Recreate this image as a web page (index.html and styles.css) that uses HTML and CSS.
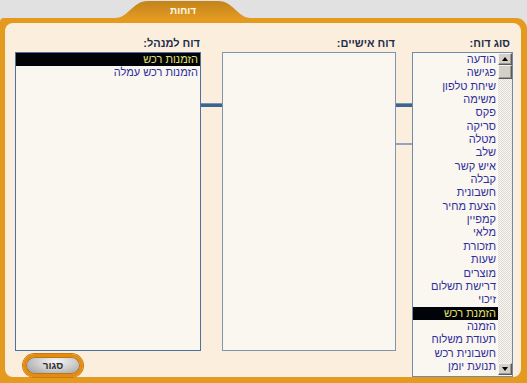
FILE: index.html
```html
<!DOCTYPE html>
<html lang="he">
<head>
<meta charset="utf-8">
<title>דוחות</title>
<link rel="stylesheet" href="styles.css">
</head>
<body>
<div class="tabbar">
  <div class="tab">דוחות</div>
</div>
<div class="panel">
  <div class="inner">
    <div class="cols">
      <div class="col col-type">
        <div class="label">סוג דוח:</div>
        <div class="listbox type-list">
          <div class="items">
            <div class="item">הודעה</div>
            <div class="item">פגישה</div>
            <div class="item">שיחת טלפון</div>
            <div class="item">משימה</div>
            <div class="item">פקס</div>
            <div class="item">סריקה</div>
            <div class="item">מטלה</div>
            <div class="item">שלב</div>
            <div class="item">איש קשר</div>
            <div class="item">קבלה</div>
            <div class="item">חשבונית</div>
            <div class="item">הצעת מחיר</div>
            <div class="item">קמפיין</div>
            <div class="item">מלאי</div>
            <div class="item">תזכורת</div>
            <div class="item">שעות</div>
            <div class="item">מוצרים</div>
            <div class="item">דרישת תשלום</div>
            <div class="item">זיכוי</div>
            <div class="item selected">הזמנת רכש</div>
            <div class="item">הזמנה</div>
            <div class="item">תעודת משלוח</div>
            <div class="item">חשבונית רכש</div>
            <div class="item">תנועת יומן</div>
          </div>
          <div class="scrollbar">
            <div class="sbtn"><span class="tri up"></span></div>
            <div class="thumb"></div>
            <div class="track"></div>
            <div class="sbtn down-btn"><span class="tri down"></span></div>
          </div>
        </div>
      </div>
      <div class="link link-b">
        <div class="bar"></div>
        <div class="bar-thin"></div>
      </div>
      <div class="col col-personal">
        <div class="label">דוח אישיים:</div>
        <div class="listbox personal-list"></div>
      </div>
      <div class="link link-a">
        <div class="bar"></div>
      </div>
      <div class="col col-manager">
        <div class="label">דוח למנהל:</div>
        <div class="listbox manager-list">
          <div class="item selected">הזמנות רכש</div>
          <div class="item">הזמנות רכש עמלה</div>
        </div>
        <button class="close">סגור</button>
      </div>
    </div>
  </div>
</div>
</body>
</html>
```
FILE: styles.css
```css
* { box-sizing: border-box; }
html, body { margin: 0; padding: 0; }
body {
  width: 527px;
  height: 383px;
  overflow: hidden;
  background: #e1e1e1;
  font-family: "Liberation Sans", "DejaVu Sans", Arial, sans-serif;
}
.tabbar {
  height: 18px;
  padding-left: 115px;
  padding-top: 1px;
  display: flex;
}
.tab {
  width: 136px;
  height: 17px;
  clip-path: path('M0 17 C 14 17 17 0 33 0 L 103 0 C 119 0 122 17 136 17 Z');
  background: linear-gradient(#c4841b, #d4901f 60%, #e39a21);
  display: flex;
  align-items: center;
  justify-content: center;
  color: #fffbea;
  font-weight: bold;
  font-size: 10px;
  padding-top: 1px;
  direction: rtl;
}
.panel {
  height: 365px;
  background: #e4991f;
  padding: 5px 6px 6px 5px;
  border-radius: 4px 11px 0 0;
}
.inner {
  height: 100%;
  background: #fbeedd;
  border-radius: 8px;
  padding: 14px 8px 0 10px;
}
.cols {
  display: flex;
  direction: rtl;
  align-items: flex-start;
}
.col {
  display: flex;
  flex-direction: column;
}
.col-type { width: 101px; }
.col-personal { width: 174px; }
.col-manager { width: 186px; }
.label {
  height: 12px;
  line-height: 12px;
  margin-bottom: 3px;
  font-size: 11px;
  font-weight: bold;
  color: #1f2f4b;
  padding-right: 1px;
}
.col-type .label { padding-right: 3px; }
.listbox {
  background: #faf6f0;
  border: 1px solid #6f8aab;
}
.manager-list {
  height: 299px;
  border-color: #4d72a0;
}
.personal-list {
  height: 299px;
  border-color: #7f95ae;
}
.type-list {
  height: 325px;
  display: flex;
  direction: ltr;
}
.items {
  flex: 1;
  direction: rtl;
  overflow: hidden;
}
.item {
  height: 13.35px;
  line-height: 13.35px;
  font-size: 11px;
  color: #2f2f9c;
  padding-right: 2px;
  white-space: nowrap;
  text-align: right;
}
.item.selected {
  background: #020308;
  color: #e0e070;
}
.scrollbar {
  width: 14px;
  display: flex;
  flex-direction: column;
}
.sbtn, .thumb {
  background: #d4d0c8;
  border: 1px solid;
  border-color: #f4f3ef #5a5a5a #5a5a5a #f4f3ef;
  box-shadow: inset -1px -1px 0 #9c9a94;
}
.sbtn {
  height: 12px;
  display: flex;
  align-items: center;
  justify-content: center;
}
.thumb {
  height: 14px;
}
.track {
  flex: 1;
  background-color: #eceae5;
  background-image: repeating-conic-gradient(#dedbd5 0 25%, #f6f5f2 0 50%);
  background-size: 2px 2px;
}
.down-btn { margin-bottom: 1px; }
.tri {
  width: 0;
  height: 0;
  border-left: 3.5px solid transparent;
  border-right: 3.5px solid transparent;
}
.tri.up { border-bottom: 4px solid #000; }
.tri.down { border-top: 4px solid #000; }
.link {
  display: flex;
  flex-direction: column;
  padding-top: 66px;
}
.link-a { width: 21px; }
.link-b { width: 16px; }
.bar {
  height: 4px;
  background: #3d6390;
  border-top: 1px solid #7593b7;
}
.bar-thin {
  height: 2px;
  margin-top: 36px;
  background: #8fa4bd;
}
.close {
  align-self: flex-end;
  margin: 3px 8px 0 0;
  margin-left: 8px;
  margin-right: 0;
  width: 60px;
  height: 23px;
  border: 3px solid #e58b10;
  border-radius: 12px;
  background: radial-gradient(ellipse at 55% 25%, #f6f6f6 0%, #cfcfcf 45%, #979797 100%);
  box-shadow: 0 0 0 1px #c97a12, inset 0 0 0 1px #b87818;
  font-family: "Liberation Sans", "DejaVu Sans", Arial, sans-serif;
  font-size: 10px;
  font-weight: bold;
  color: #2e2e2e;
  padding: 0;
  direction: rtl;
}
```
